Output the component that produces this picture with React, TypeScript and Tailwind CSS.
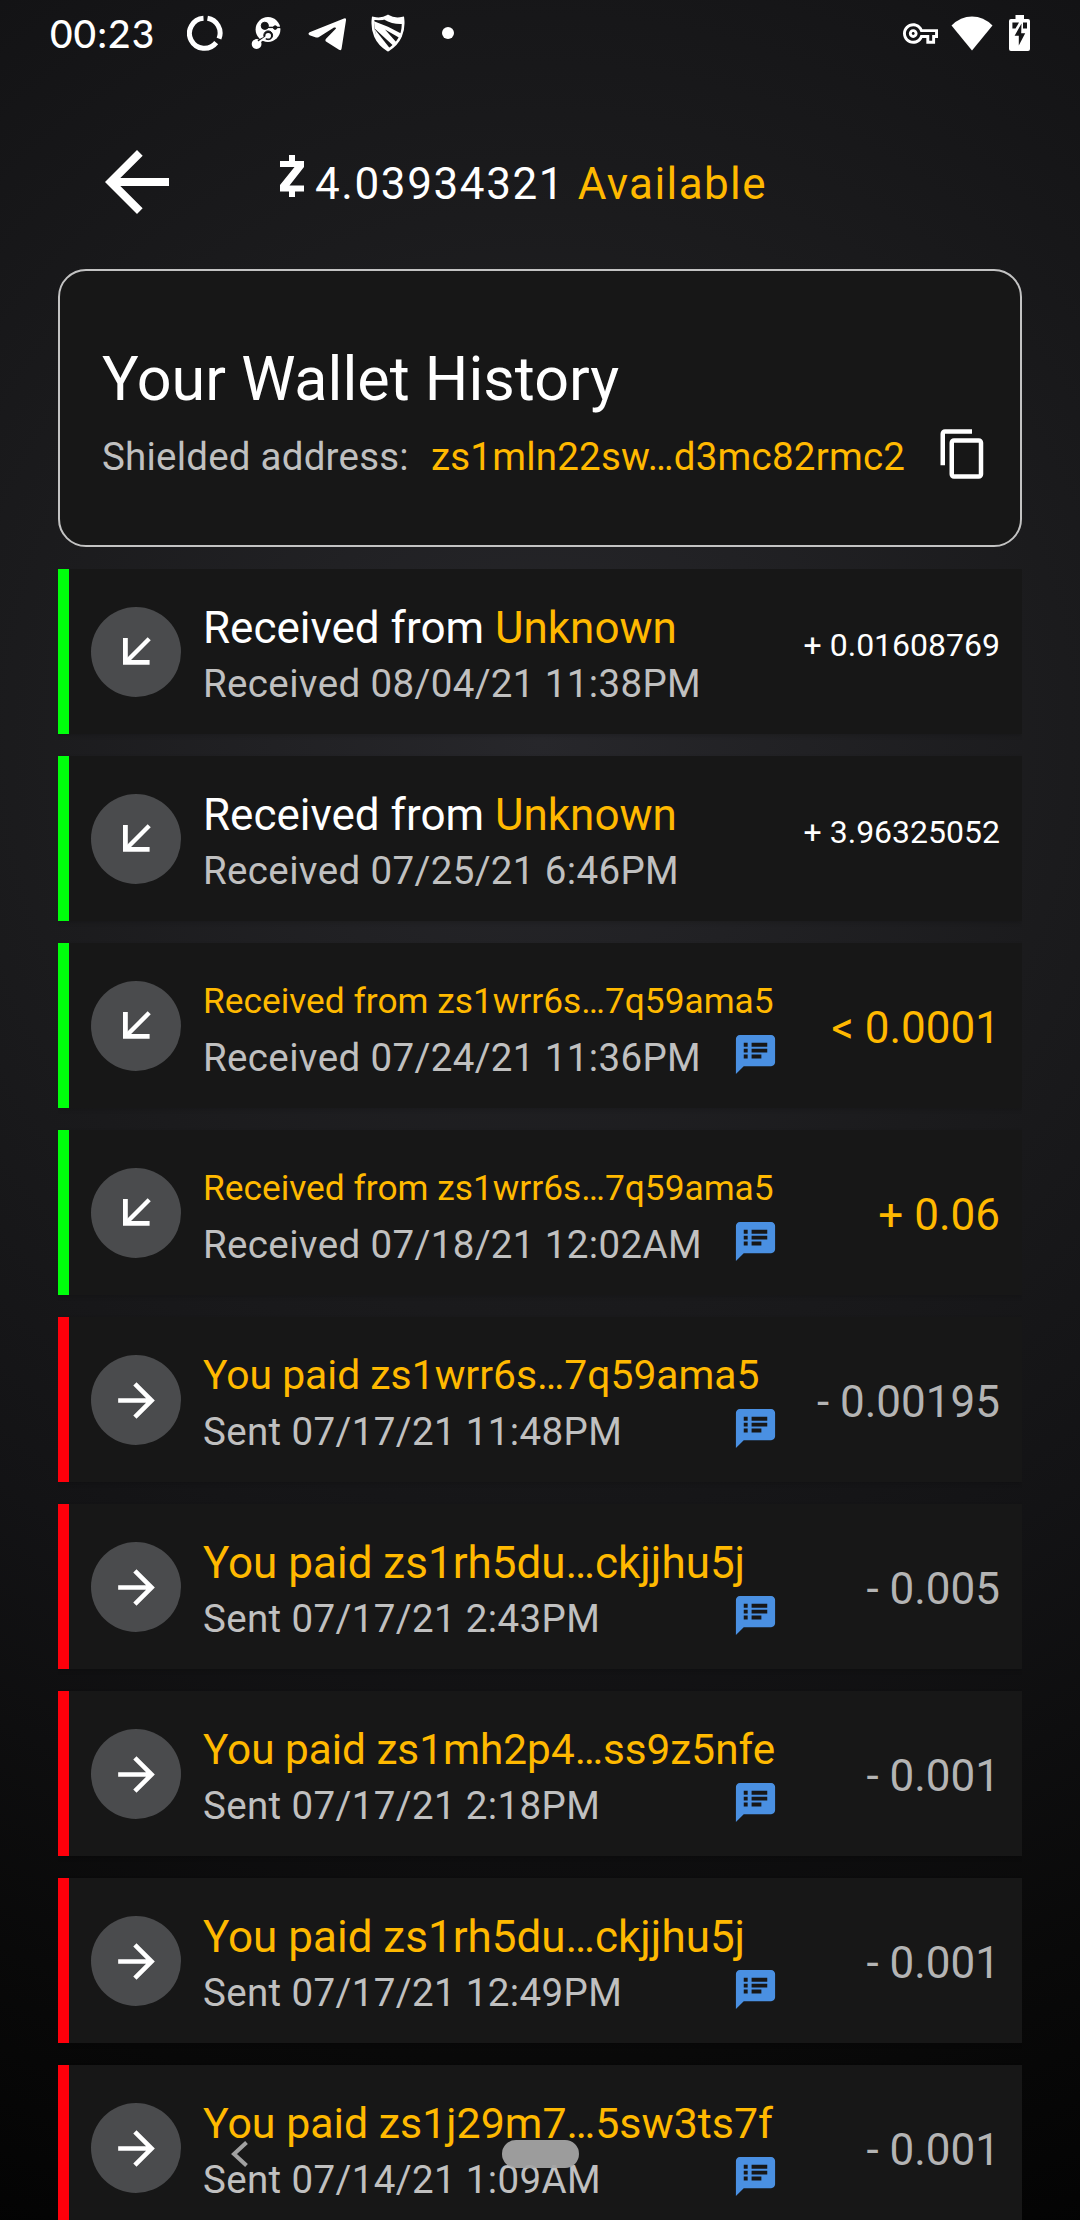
type Tx = {
  kind: 'received' | 'sent';
  title: string;
  accent?: string;
  titleClass: string;
  date: string;
  amount: string;
  amountClass: string;
  memo: boolean;
};

const AMOUNT_SMALL = 'mt-[46px] text-[32px] text-white';
const AMOUNT_GOLD = 'mt-[55px] text-[44px] text-[#ffb900]';
const AMOUNT_GRAY = 'mt-[55px] text-[44px] text-[#b4b4b4]';

const transactions: Tx[] = [
  { kind: 'received', title: 'Received from ', accent: 'Unknown', titleClass: 'text-[44px] leading-[54px] text-white', date: 'Received 08/04/21 11:38PM', amount: '+ 0.01608769', amountClass: AMOUNT_SMALL, memo: false },
  { kind: 'received', title: 'Received from ', accent: 'Unknown', titleClass: 'text-[44px] leading-[54px] text-white', date: 'Received 07/25/21 6:46PM', amount: '+ 3.96325052', amountClass: AMOUNT_SMALL, memo: false },
  { kind: 'received', title: 'Received from zs1wrr6s…7q59ama5', titleClass: 'text-[35.3px] leading-[52px] text-[#ffb900]', date: 'Received 07/24/21 11:36PM', amount: '< 0.0001', amountClass: AMOUNT_GOLD, memo: true },
  { kind: 'received', title: 'Received from zs1wrr6s…7q59ama5', titleClass: 'text-[35.3px] leading-[52px] text-[#ffb900]', date: 'Received 07/18/21 12:02AM', amount: '+ 0.06', amountClass: AMOUNT_GOLD, memo: true },
  { kind: 'sent', title: 'You paid zs1wrr6s…7q59ama5', titleClass: 'text-[40.85px] leading-[52px] text-[#ffb900]', date: 'Sent 07/17/21 11:48PM', amount: '- 0.00195', amountClass: AMOUNT_GRAY, memo: true },
  { kind: 'sent', title: 'You paid zs1rh5du…ckjjhu5j', titleClass: 'text-[44px] leading-[54px] text-[#ffb900]', date: 'Sent 07/17/21 2:43PM', amount: '- 0.005', amountClass: AMOUNT_GRAY, memo: true },
  { kind: 'sent', title: 'You paid zs1mh2p4…ss9z5nfe', titleClass: 'text-[42.3px] leading-[53px] text-[#ffb900]', date: 'Sent 07/17/21 2:18PM', amount: '- 0.001', amountClass: AMOUNT_GRAY, memo: true },
  { kind: 'sent', title: 'You paid zs1rh5du…ckjjhu5j', titleClass: 'text-[44px] leading-[54px] text-[#ffb900]', date: 'Sent 07/17/21 12:49PM', amount: '- 0.001', amountClass: AMOUNT_GRAY, memo: true },
  { kind: 'sent', title: 'You paid zs1j29m7…5sw3ts7f', titleClass: 'text-[42.9px] leading-[53px] text-[#ffb900]', date: 'Sent 07/14/21 1:09AM', amount: '- 0.001', amountClass: AMOUNT_GRAY, memo: true },
];

function StatusBar() {
  return (
    <header className="flex h-[66px] items-center text-white">
      <span className="ml-[50px] w-[137px] font-[Lato,sans-serif] text-[39px] leading-none font-medium tracking-[1px]">00:23</span>
      {/* data usage ring */}
      <svg className="size-[36px]" viewBox="0 0 36 36" fill="none" stroke="currentColor" strokeWidth="5">
        <path d="M16.5 3.3A15 15 0 1 0 29.2 27.6" />
        <path d="M20.5 3.2A15 15 0 0 1 32 23.6" />
      </svg>
      {/* molecule-like app mark */}
      <svg className="ml-[28px] h-[36px] w-[32px]" viewBox="0 0 32 36">
        <circle cx="17" cy="14.5" r="12.4" fill="currentColor" />
        <circle cx="5.6" cy="29" r="4.9" fill="currentColor" />
        <g fill="#151517" stroke="#151517">
          <circle cx="13.8" cy="10.8" r="3.6" />
          <circle cx="24.2" cy="12.6" r="1.8" />
          <path d="M14 12.4H30" strokeWidth="1.4" />
          <circle cx="17.2" cy="20.3" r="4.4" />
          <path d="M14 22.5L7 26" strokeWidth="2" />
        </g>
        <circle cx="17.2" cy="20.8" r="2.8" fill="currentColor" />
        <path d="M16 21.5L6 28.6" stroke="currentColor" strokeWidth="2" />
      </svg>
      {/* paper plane */}
      <svg className="ml-[25px] h-[36px] w-[38px]" viewBox="0 0 38 36" fill="currentColor">
        <path d="M1.6 17.3L36 3.4Q38.4 2.6 38 5.2L33.6 33.6Q33.2 36.2 31 34.8L18 26.4Q16.8 25.2 18 23.8L28 13.4Q28 12 26 12.6L10.6 22.2Q9.4 22.8 8 22.4L1.6 20.2Q-.6 18.8 1.6 17.3z" />
      </svg>
      {/* shield */}
      <svg className="ml-[25px] h-[38px] w-[34px]" viewBox="0 0 34 38">
        <path d="M2.2 4.2Q11 6 17 2.2Q23 6 31.8 4.2C33.4 17 29 29 17 36C5 29 .6 17 2.2 4.2z" fill="none" stroke="currentColor" strokeWidth="2.8" />
        <path d="M3 7.2L17 12.8L31 20L29.6 24.4L14 15.6L26 29L22.6 32L3.6 14.6z" fill="currentColor" />
        <path d="M13 5.6Q22 10.8 32 10V4.4Q23 5.8 17 2.4z" fill="currentColor" />
        <path d="M3.6 15L19 34.4L16 35L6 26z" fill="currentColor" />
      </svg>
      <span className="ml-[37px] size-[12px] rounded-full bg-white" />
      <span className="flex-1" />
      <svg className="size-[35px]" viewBox="0 0 24 24" fill="currentColor">
        <path d="M22 19h-6v-4h-2.68c-1.14 2.42-3.6 4-6.32 4-3.86 0-7-3.14-7-7s3.14-7 7-7c2.72 0 5.17 1.58 6.32 4H24v6h-2v4zm-4-2h2v-4h2v-2H11.94l-.23-.67C11.01 8.34 9.11 7 7 7c-2.76 0-5 2.24-5 5s2.24 5 5 5c2.11 0 4.01-1.34 4.71-3.33l.23-.67H18v4zM7 15c-1.65 0-3-1.35-3-3s1.35-3 3-3 3 1.35 3 3-1.35 3-3 3zm0-4c-.55 0-1 .45-1 1s.45 1 1 1 1-.45 1-1-.45-1-1-1z" />
      </svg>
      <svg className="ml-[13px] h-[35px] w-[42px]" viewBox="0 0 42 35" fill="currentColor">
        <path d="M.5 9.5Q9.5 .5 21 .5T41.5 9.5L21 34.5z" />
      </svg>
      <svg className="mr-[50px] ml-[16px] h-[36px] w-[21px]" viewBox="0 0 21 36">
        <path d="M6.5 0H15V4H19Q21 4 21 6V34Q21 36 19 36H2Q0 36 0 34V6Q0 4 2 4H6.5z" fill="currentColor" />
        <path d="M3.4 7.4H10L6.5 13.6H3.4zM14 7.4H18V13.6H14z" fill="#151517" />
        <path d="M12.5 8.5L5.6 20.8H9.8V30.5L16.2 18.2H12.2z" fill="#151517" />
      </svg>
    </header>
  );
}

function BackArrow() {
  return (
    <svg className="size-[96px]" viewBox="0 0 24 24" fill="white">
      <path d="M20 11H7.83l5.59-5.59L12 4l-8 8 8 8 1.41-1.41L7.83 13H20v-2z" />
    </svg>
  );
}

function ZcashMark() {
  return (
    <svg className="h-[42px] w-[24px]" viewBox="0 0 24 42" fill="white">
      <path d="M9 0h6v6h9v6L9.5 30.5H24v6h-9V42H9v-5.5H0V30L14.5 12H0V6h9z" />
    </svg>
  );
}

function CopyIcon() {
  return (
    <svg className="size-[54px]" viewBox="0 0 24 24" fill="white">
      <path d="M16 1H4c-1.1 0-2 .9-2 2v14h2V3h12V1zm3 4H8c-1.1 0-2 .9-2 2v14c0 1.1.9 2 2 2h11c1.1 0 2-.9 2-2V7c0-1.1-.9-2-2-2zm0 16H8V7h11v14z" />
    </svg>
  );
}

function DirectionIcon({ kind }: { kind: Tx['kind'] }) {
  return (
    <span className="mt-[38px] ml-[22px] flex size-[90px] shrink-0 items-center justify-center rounded-full bg-[#4a4b4d]">
      {kind === 'received' ? (
        <svg className="mb-[2px] ml-[2px] size-[28px]" viewBox="0 0 28 28" fill="none" stroke="white" strokeWidth="4.8">
          <path d="M2.4 1V25.4H26.6" />
          <path d="M2.8 25.2L26.2 1.8" strokeWidth="4.4" />
        </svg>
      ) : (
        <svg className="size-[55px]" viewBox="0 0 24 24" fill="white">
          <path d="M12 4l-1.41 1.41L16.17 11H4v2h12.17l-5.58 5.59L12 20l8-8z" />
        </svg>
      )}
    </span>
  );
}

function MemoIcon() {
  return (
    <svg className="size-[47px]" viewBox="0 0 24 24" fill="#4a90e2">
      <path d="M20 2H4c-1.1 0-1.99.9-1.99 2L2 22l4-4h14c1.1 0 2-.9 2-2V4c0-1.1-.9-2-2-2zM8 14H6v-2h2v2zm0-3H6V9h2v2zm0-3H6V6h2v2zm7 6h-5v-2h5v2zm3-3h-8V9h8v2zm0-3h-8V6h8v2z" />
    </svg>
  );
}

function Row({ tx }: { tx: Tx }) {
  return (
    <li className="flex h-[165px] shrink-0 bg-[#171717] pr-[22px] whitespace-nowrap shadow-[0_2px_4px_rgba(0,0,0,0.15)]">
      <span className={tx.kind === 'received' ? 'w-[11px] bg-[#00ff0c]' : 'w-[11px] bg-[#ff000b]'} />
      <DirectionIcon kind={tx.kind} />
      <div className="ml-[22px] flex-1 pt-[32px]">
        <p className={`h-[54px] ${tx.titleClass}`}>
          {tx.title}
          {tx.accent && <span className="text-[#ffb900]">{tx.accent}</span>}
        </p>
        <div className="mt-[2px] flex w-[576px] items-start justify-between">
          <p className="mt-[5px] text-[38.5px] leading-[44px] tracking-[0.36px] text-[#c0c0c0]">{tx.date}</p>
          {tx.memo && <MemoIcon />}
        </div>
      </div>
      <p className={`leading-[60px] ${tx.amountClass}`}>{tx.amount}</p>
    </li>
  );
}

export default function App() {
  return (
    <div className="relative flex h-[2220px] w-[1080px] flex-col overflow-hidden bg-[radial-gradient(circle_at_540px_740px,#27272b_0px,#1b1b1d_530px,#131315_915px,#090909_1320px,#030303_1600px)] font-[Roboto,sans-serif]">
      <StatusBar />
      <div className="mt-[68px] flex h-[135px] items-start pl-[89px]">
        <BackArrow />
        <div className="mt-[21px] ml-[95px] flex items-start">
          <ZcashMark />
          <p className="ml-[11px] text-[44px] leading-[58px] whitespace-pre text-white">
            <span className="tracking-[1.6px]">4.03934321 </span>
            <span className="tracking-[1.4px] text-[#ffb900]">Available</span>
          </p>
        </div>
      </div>
      <section className="mx-[58px] flex h-[278px] shrink-0 flex-col rounded-[28px] border-2 border-[#c3c3c3] bg-[#171717] pr-[30px] pl-[42px]">
        <h1 className="mt-[71px] text-[61.1px] leading-[74px] text-white">Your Wallet History</h1>
        <div className="mt-[11px] flex items-start text-[38.5px] leading-[54px] tracking-[0.22px] whitespace-nowrap">
          <p className="mt-[3px] text-[#c0c0c0]">Shielded address:</p>
          <p className="mt-[3px] ml-[22px] text-[#ffb900]">zs1mln22sw…d3mc82rmc2</p>
          <span className="flex-1" />
          <CopyIcon />
        </div>
      </section>
      <ul className="mx-[58px] mt-[22px] flex flex-1 flex-col gap-[22px] overflow-hidden">
        {transactions.map((tx) => (
          <Row key={`${tx.date}${tx.amount}`} tx={tx} />
        ))}
      </ul>
      {/* system navigation floats over the list */}
      <nav className="absolute top-[2140px] left-[230px] flex h-[28px] items-center">
        <svg className="h-[28px] w-[19px]" viewBox="0 0 19 28" fill="none" stroke="#a1a1a1" strokeWidth="4">
          <path d="M16.5 2.5L4 14L16.5 25.5" />
        </svg>
        <span className="ml-[253px] h-[28px] w-[77px] rounded-full bg-[#a3a3a3]/95" />
      </nav>
    </div>
  );
}
